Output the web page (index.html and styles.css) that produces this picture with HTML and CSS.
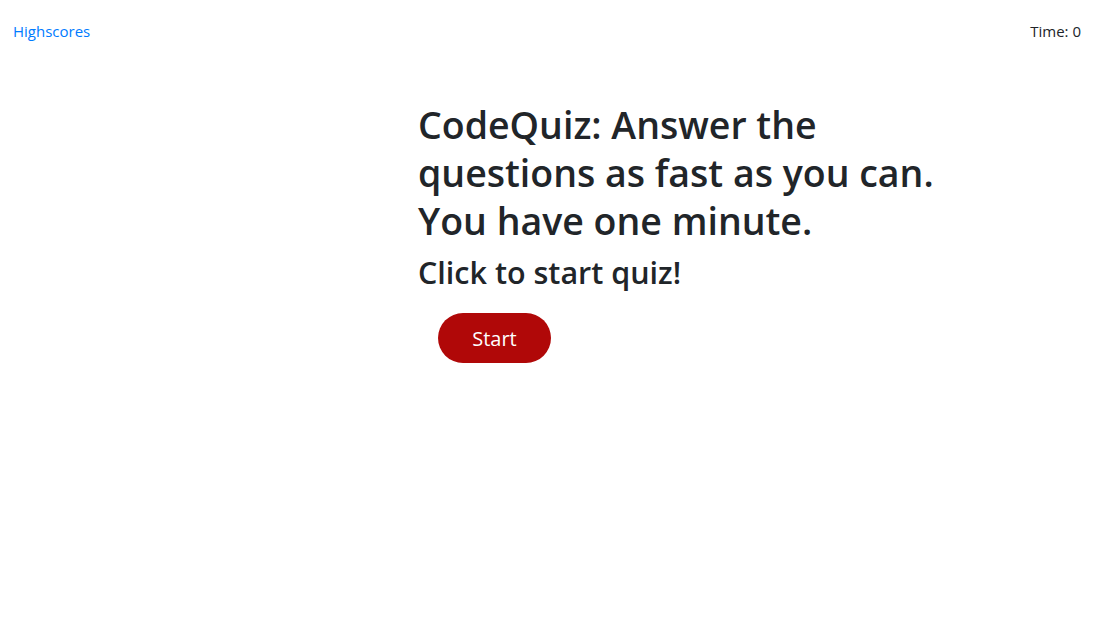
FILE: index.html
```html
<!DOCTYPE html>
<html lang="en">
<head>
<meta charset="utf-8">
<title>CodeQuiz</title>
<link rel="stylesheet" href="styles.css">
</head>
<body>
<header class="topbar">
  <a class="highscores" href="#">Highscores</a>
  <span class="timer">Time: 0</span>
</header>
<main class="quiz">
  <h1 class="title">CodeQuiz: Answer the questions as fast as you can. You have one minute.</h1>
  <h2 class="subtitle">Click to start quiz!</h2>
  <button class="start-btn" type="button">Start</button>
</main>
</body>
</html>
```
FILE: styles.css
```css
* { box-sizing: border-box; }
html, body { margin: 0; padding: 0; }
body {
  font-family: "Open Sans", "Noto Sans", sans-serif;
  color: #212529;
  background: #fff;
  font-size: 16px;
}
.topbar {
  display: flex;
  justify-content: space-between;
  align-items: center;
  padding: 20px 31px 0 13px;
  height: 42px;
  font-size: 15px;
}
.highscores {
  color: #007bff;
  text-decoration: none;
}
.timer { color: #212529; }
.quiz {
  padding-left: 418px;
  padding-top: 59px;
}
.title {
  width: 540px;
  margin: 0;
  font-size: 37.5px;
  font-weight: 600;
  line-height: 48px;
}
.subtitle {
  margin: 7px 0 0;
  font-size: 30.5px;
  font-weight: 600;
  line-height: 40px;
}
.start-btn {
  display: block;
  margin: 21px 0 0 20px;
  width: 113px;
  height: 50px;
  border: none;
  border-radius: 25px;
  background: #b00808;
  color: #fff;
  font-family: inherit;
  font-size: 20px;
  cursor: pointer;
}
```
